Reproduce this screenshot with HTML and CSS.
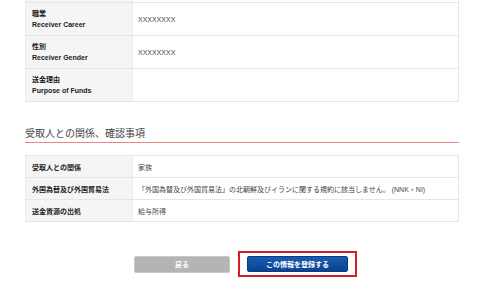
FILE: index.html
```html
<!DOCTYPE html>
<html lang="ja">
<head>
<meta charset="utf-8">
<link rel="stylesheet" href="styles.css">
</head>
<body>
<div class="page">
  <div class="tbl">
    <div class="row stub"><div class="lbl"></div><div class="val"></div></div>
    <div class="row tall">
      <div class="lbl"><span>職業</span><span>Receiver Career</span></div>
      <div class="val">XXXXXXXX</div>
    </div>
    <div class="row tall">
      <div class="lbl"><span>性別</span><span>Receiver Gender</span></div>
      <div class="val">XXXXXXXX</div>
    </div>
    <div class="row tall">
      <div class="lbl"><span>送金理由</span><span>Purpose of Funds</span></div>
      <div class="val"></div>
    </div>
  </div>

  <h2 class="heading">受取人との関係、確認事項</h2>

  <div class="tbl boxed">
    <div class="row short">
      <div class="lbl">受取人との関係</div>
      <div class="val">家族</div>
    </div>
    <div class="row short">
      <div class="lbl">外国為替及び外国貿易法</div>
      <div class="val">「外国為替及び外国貿易法」の北朝鮮及びイランに関する規約に該当しません。 (NNK・NI)</div>
    </div>
    <div class="row short">
      <div class="lbl">送金資源の出処</div>
      <div class="val">給与所得</div>
    </div>
  </div>

  <div class="actions">
    <button class="btn back">戻る</button>
    <div class="focus">
      <button class="btn submit">この情報を登録する</button>
    </div>
  </div>
</div>
</body>
</html>
```

FILE: styles.css
```css
* { box-sizing: border-box; }
html, body { margin: 0; padding: 0; background: #fff; }
body {
  font-family: "Liberation Sans", "Noto Sans CJK JP", sans-serif;
  color: #333;
  font-size: 7px;
}
.page {
  width: 434px;
  margin-left: 25px;
}
.tbl {
  border-left: 1px solid #ebebeb;
  border-right: 1px solid #e6e6e6;
}
.tbl.boxed {
  border-top: 1px solid #e6e6e6;
  margin-top: 12px;
}
.row {
  display: grid;
  grid-template-columns: 107px 1fr;
  border-bottom: 1px solid #e6e6e6;
}
.lbl {
  background: #f5f5f5;
  border-right: 1px solid #ececec;
  font-weight: bold;
  color: #222;
  padding-left: 6px;
  display: flex;
  flex-direction: column;
  justify-content: center;
}
.val {
  padding-left: 5px;
  display: flex;
  align-items: center;
  color: #444;
}
.stub { height: 3px; }
.stub .lbl, .stub .val { height: 2px; }
.tall { height: 33px; }
.tall .lbl span { line-height: 11px; }
.short { height: 22px; }
.heading {
  margin: 25px 0 0;
  font-size: 10px;
  line-height: 14px;
  font-weight: normal;
  color: #444;
  padding-bottom: 1px;
  border-bottom: 1px solid #ee8585;
}
.actions {
  display: flex;
  justify-content: center;
  align-items: center;
  gap: 8px;
  margin-top: 29px;
  padding-left: 7px;
}
.btn {
  border: none;
  font-family: "Liberation Sans", "Noto Sans CJK JP", sans-serif;
  font-size: 7px;
  font-weight: bold;
  color: #fff;
  height: 17px;
  border-radius: 2px;
  padding: 0;
  margin: 0;
}
.back {
  width: 96px;
  background: #b4b4b4;
  border: 1px solid #c8c8c8;
}
.focus {
  border: 2px solid #d31d25;
  padding: 3px 7px;
  display: flex;
}
.submit {
  width: 101px;
  height: 16px;
  background: linear-gradient(#1a5cb3, #0b428f);
  border: 1px solid #0a3c82;
}
```
